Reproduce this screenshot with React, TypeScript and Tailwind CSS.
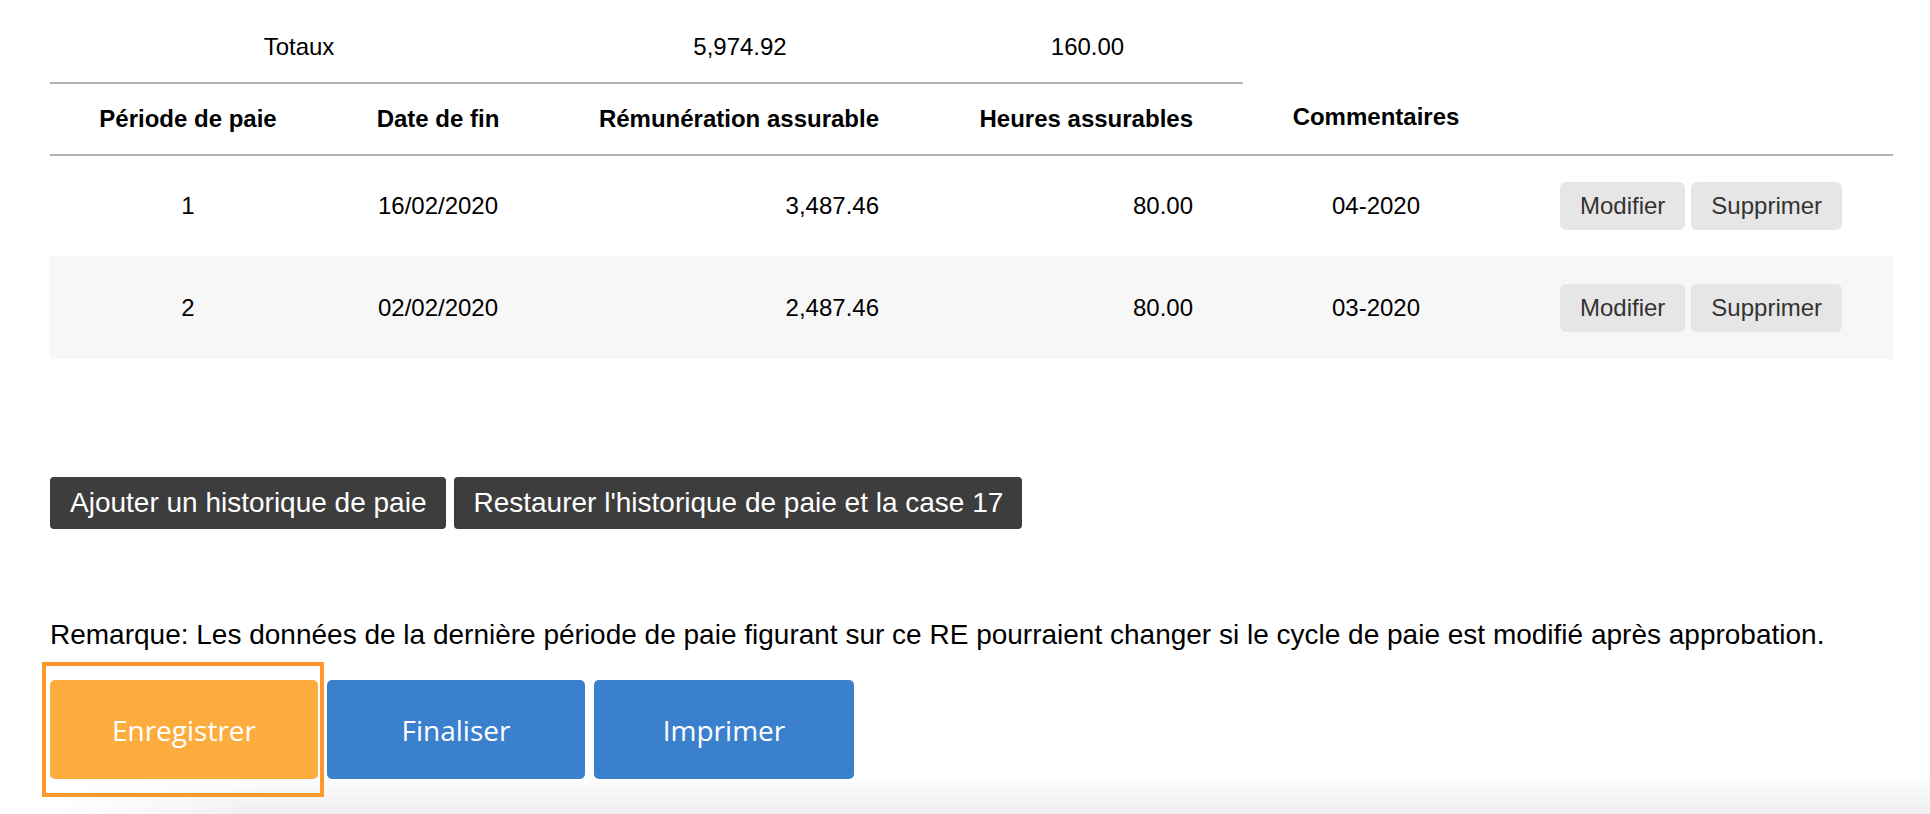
import React from 'react';

interface PayRow {
    period: number;
    endDate: string;
    earnings: string;
    hours: string;
    comment: string;
}

const rows: PayRow[] = [
    { period: 1, endDate: '16/02/2020', earnings: '3,487.46', hours: '80.00', comment: '04-2020' },
    { period: 2, endDate: '02/02/2020', earnings: '2,487.46', hours: '80.00', comment: '03-2020' },
];

const cols = 'grid grid-cols-[276px_224px_349px_314px_326px_354px]';

const App: React.FC = () => {
    return (
        <div className="relative min-h-[814px] w-[1930px] overflow-hidden bg-white pl-[50px] font-['Liberation_Sans',Arial,sans-serif] text-black">
            {/* footer shadow at the bottom of the viewport */}
            <div className="pointer-events-none absolute bottom-0 left-0 right-0 h-[40px] bg-gradient-to-b from-white/0 to-[#eeeeee] [mask-image:linear-gradient(to_right,transparent_60px,black_260px)]"></div>

            {/* totals */}
            <div className="grid h-[84px] w-[1193px] grid-cols-[498px_384px_311px] items-center border-b-2 border-[#b4b4b4] pt-[12px] text-[24px]">
                <div className="text-center">Totaux</div>
                <div className="text-center">5,974.92</div>
                <div className="text-center">160.00</div>
            </div>

            {/* table */}
            <div className="w-[1843px]">
                <div className={`${cols} h-[72px] items-center border-b-2 border-[#b4b4b4] text-[24px] font-bold`}>
                    <div className="text-center">Période de paie</div>
                    <div className="text-center">Date de fin</div>
                    <div className="pr-[20px] text-right">Rémunération assurable</div>
                    <div className="pr-[20px] text-right">Heures assurables</div>
                    <div className="-mt-[4px] text-center">Commentaires</div>
                    <div></div>
                </div>
                {rows.map((row, i) => (
                    <div
                        key={row.period}
                        className={`${cols} items-center text-[24px] ${i % 2 === 1 ? 'h-[103px] bg-[#f7f7f7]' : 'h-[100px]'}`}
                    >
                        <div className="text-center">{row.period}</div>
                        <div className="text-center">{row.endDate}</div>
                        <div className="pr-[20px] text-right">{row.earnings}</div>
                        <div className="pr-[20px] text-right">{row.hours}</div>
                        <div className="text-center">{row.comment}</div>
                        <div className="flex gap-[6px] pl-[21px]">
                            <button className="h-[48px] rounded-[6px] bg-[#e6e6e6] px-[20px] text-[24px] text-[#333333]">Modifier</button>
                            <button className="h-[48px] rounded-[6px] bg-[#e6e6e6] px-[20px] text-[24px] text-[#333333]">Supprimer</button>
                        </div>
                    </div>
                ))}
            </div>

            <div className="mt-[118px] flex gap-[8px]">
                <button className="h-[52px] rounded-[4px] bg-[#3d3d3d] px-[20px] text-[28px] text-white">Ajouter un historique de paie</button>
                <button className="h-[52px] rounded-[4px] bg-[#3d3d3d] px-[19px] text-[28px] text-white">Restaurer l'historique de paie et la case 17</button>
            </div>

            <p className="mt-[90px] text-[28px] leading-[32px]">
                Remarque: Les données de la dernière période de paie figurant sur ce RE pourraient changer si le cycle de paie est modifié après approbation.
            </p>

            <div className="relative -ml-[8px] mt-[11px] flex items-center font-['Open_Sans',sans-serif] text-[28px] font-medium text-white">
                <div className="border-[4px] border-[#ff982c] py-[14px] pl-[4px] pr-[2px]">
                    <button className="h-[99px] w-[268px] rounded-[5px] bg-[#fdac3e]">Enregistrer</button>
                </div>
                <button className="ml-[3px] h-[99px] w-[258px] rounded-[5px] bg-[#3a80cd]">Finaliser</button>
                <button className="ml-[9px] h-[99px] w-[260px] rounded-[5px] bg-[#3a80cd]">Imprimer</button>
            </div>
        </div>
    );
};

export default App;
